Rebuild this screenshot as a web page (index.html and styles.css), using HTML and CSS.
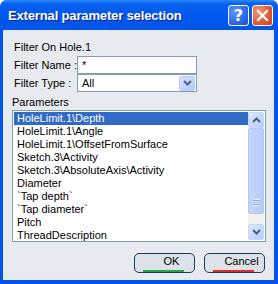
FILE: index.html
```html
<!DOCTYPE html>
<html lang="en">
<head>
    <meta charset="UTF-8">
    <title>External parameter selection</title>
    <link rel="stylesheet" href="styles.css">
</head>
<body>
    <div class="window">
        <!-- Title bar -->
        <div class="titlebar">
            <span class="title">External parameter selection</span>
            <div class="caption-buttons">
                <div class="cap-btn help">?</div>
                <div class="cap-btn close">
                    <svg width="13" height="13" viewBox="0 0 13 13">
                        <path d="M2 2 L11 11 M11 2 L2 11" stroke="#fff" stroke-width="2.2" stroke-linecap="square"/>
                    </svg>
                </div>
            </div>
        </div>

        <div class="client">
            <div class="filter-on">Filter On Hole.1</div>
            <div class="field-row">
                <label class="field-label">Filter Name :</label>
                <div class="textbox">*</div>
            </div>
            <div class="field-row">
                <label class="field-label">Filter Type :</label>
                <div class="combo">
                    <span>All</span>
                    <div class="drop-btn">
                        <svg width="9" height="6" viewBox="0 0 9 6">
                            <path d="M1 1 L4.5 4.5 L8 1" fill="none" stroke="#4d6185" stroke-width="2"/>
                        </svg>
                    </div>
                </div>
            </div>

            <div class="group-label">Parameters</div>
            <div class="listbox">
                <ul class="items">
                    <li class="selected">HoleLimit.1\Depth</li>
                    <li>HoleLimit.1\Angle</li>
                    <li>HoleLimit.1\OffsetFromSurface</li>
                    <li>Sketch.3\Activity</li>
                    <li>Sketch.3\AbsoluteAxis\Activity</li>
                    <li>Diameter</li>
                    <li>`Tap depth`</li>
                    <li>`Tap diameter`</li>
                    <li>Pitch</li>
                    <li>ThreadDescription</li>
                </ul>
                <div class="scrollbar">
                    <div class="sb-btn">
                        <svg width="9" height="6" viewBox="0 0 9 6">
                            <path d="M1 5 L4.5 1.5 L8 5" fill="none" stroke="#4d6185" stroke-width="2"/>
                        </svg>
                    </div>
                    <div class="sb-thumb">
                        <div class="grip"></div>
                    </div>
                    <div class="sb-track"></div>
                    <div class="sb-btn">
                        <svg width="9" height="6" viewBox="0 0 9 6">
                            <path d="M1 1 L4.5 4.5 L8 1" fill="none" stroke="#4d6185" stroke-width="2"/>
                        </svg>
                    </div>
                </div>
            </div>

            <div class="button-row">
                <button class="dlg-btn ok">OK</button>
                <button class="dlg-btn cancel">Cancel</button>
            </div>
        </div>
    </div>
</body>
</html>
```

FILE: styles.css
```css
body {
    margin: 0;
    padding: 0;
    font-family: "Liberation Sans", Arial, sans-serif;
    font-size: 11px;
    color: #000;
}
.window {
    width: 278px;
    height: 284px;
    box-sizing: border-box;
    display: flex;
    flex-direction: column;
    background: #0055e5;
    padding: 0 4px 4px 3px;
    border-radius: 7px 7px 0 0;
}
.titlebar {
    height: 30px;
    display: flex;
    align-items: center;
    justify-content: space-between;
    background: linear-gradient(#2b8af7 0%, #0861f0 12%, #0058ee 50%, #0055e8 100%);
    margin: 0 -4px 0 -3px;
    padding: 0 5px 0 8px;
    border-radius: 7px 7px 0 0;
}
.title {
    color: #fff;
    font-family: "Liberation Sans", Arial, sans-serif;
    font-weight: bold;
    font-size: 13px;
    letter-spacing: -0.15px;
    text-shadow: 1px 1px 0 #0a1f80;
}
.caption-buttons {
    display: flex;
    gap: 3px;
}
.cap-btn {
    width: 21px;
    height: 21px;
    box-sizing: border-box;
    border: 1px solid #fff;
    border-radius: 3px;
    display: flex;
    align-items: center;
    justify-content: center;
    color: #fff;
    font-family: "DejaVu Sans", sans-serif;
    font-weight: bold;
    font-size: 16px;
}
.help {
    background: radial-gradient(circle at 30% 30%, #5c96ff, #2663e0 70%, #1a4fc9);
}
.close {
    background: radial-gradient(circle at 30% 30%, #f29a78, #e0532b 65%, #c7401f);
}
.client {
    flex: 1;
    background: #e7ebf0;
    padding: 4px 8px 0 9px;
}
.filter-on {
    height: 17px;
    line-height: 17px;
    padding-left: 2px;
    margin-top: 5px;
}
.field-row {
    display: flex;
    align-items: center;
    height: 18px;
}
.field-label {
    width: 63px;
    padding-left: 2px;
}
.textbox, .combo {
    width: 120px;
    height: 18px;
    box-sizing: border-box;
    border: 1px solid #7f9db9;
    background: #fff;
    padding-left: 4px;
    display: flex;
    align-items: center;
}
.combo {
    justify-content: space-between;
    padding-right: 1px;
}
.drop-btn {
    width: 16px;
    height: 15px;
    box-sizing: border-box;
    border: 1px solid #b9cbf3;
    border-radius: 2px;
    background: linear-gradient(135deg, #d6e3fe, #b3c9f8);
    display: flex;
    align-items: center;
    justify-content: center;
}
.group-label {
    margin-top: 3px;
    height: 15px;
    line-height: 15px;
}
.listbox {
    height: 132px;
    box-sizing: border-box;
    border: 1px solid #7f9db9;
    background: #fff;
    display: flex;
    padding: 1px;
    width: 254px;
}
.items {
    list-style: none;
    margin: 0;
    padding: 0;
    flex: 1;
}
.items li {
    height: 13px;
    line-height: 13px;
    padding-left: 3px;
    white-space: nowrap;
}
.items li.selected {
    background: #316ac5;
    color: #fff;
}
.scrollbar {
    width: 16px;
    display: flex;
    flex-direction: column;
    background: #f3f1ec;
}
.sb-btn {
    height: 16px;
    box-sizing: border-box;
    border: 1px solid #c7d6f8;
    border-radius: 2px;
    background: linear-gradient(135deg, #dde8fe, #b6ccf9);
    display: flex;
    align-items: center;
    justify-content: center;
}
.sb-thumb {
    height: 86px;
    box-sizing: border-box;
    border: 1px solid #b5c8f3;
    border-radius: 2px;
    background: linear-gradient(90deg, #c5d6fc, #b7cbf9);
    display: flex;
    align-items: flex-end;
    justify-content: center;
    padding-bottom: 7px;
}
.grip {
    width: 7px;
    height: 7px;
    background: repeating-linear-gradient(#eef3ff 0 1px, #8caae6 1px 2px);
}
.sb-track {
    flex: 1;
}
.button-row {
    display: flex;
    justify-content: flex-end;
    gap: 9px;
    margin-top: 11px;
    padding-right: 1px;
}
.dlg-btn {
    width: 61px;
    height: 20px;
    box-sizing: border-box;
    border: 1px solid #1d3b5a;
    border-radius: 5px;
    background: #dce2e8;
    font-family: "Liberation Sans", Arial, sans-serif;
    font-size: 11px;
    line-height: 12px;
    text-align: center;
    padding: 0 0 4px 14px;
    position: relative;
}
.dlg-btn::after {
    content: "";
    position: absolute;
    left: 8px;
    right: 10px;
    bottom: 0;
    height: 2px;
}
.ok::after {
    background: #23a847;
}
.cancel::after {
    background: #e02a2a;
}
```
